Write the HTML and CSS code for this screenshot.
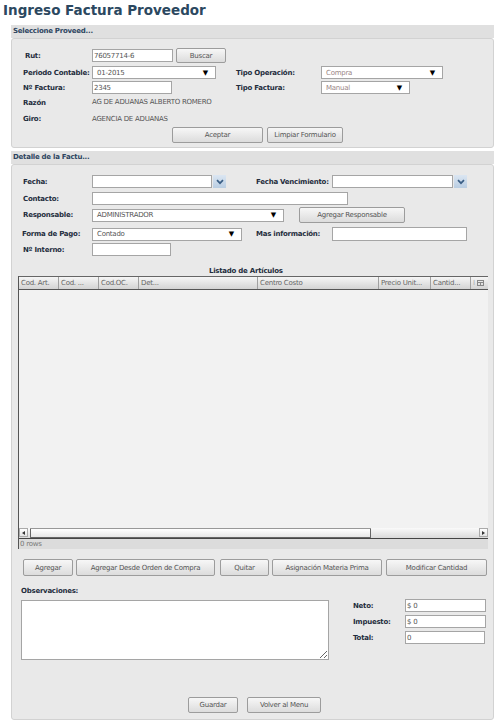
FILE: index.html
```html
<!DOCTYPE html>
<html lang="es">
  <head>
    <meta charset="utf-8">
    <title>Ingreso Factura Proveedor</title>
    <link rel="stylesheet" href="styles.css">
  </head>
  <body>
    <h1 class="page-title">Ingreso Factura Proveedor</h1>

    <div class="page">
      <!-- proveedor -->
      <div class="panel">
        <div class="panel-head">Seleccione Proveed...</div>
        <div class="panel-body prov">
          <div class="row r-rut">
            <label class="lbl lbl-rut">Rut:</label>
            <input class="txt w81" value="76057714-6">
            <button class="btn btn-buscar">Buscar</button>
          </div>
          <div class="row r-sel">
            <label class="lbl">Periodo Contable:</label>
            <div class="sel w124"><span>01-2015</span><i class="arrow">▼</i></div>
            <label class="lbl lbl-right">Tipo Operación:</label>
            <div class="sel w122 dim"><span>Compra</span><i class="arrow">▼</i></div>
          </div>
          <div class="row r-sel">
            <label class="lbl">Nº Factura:</label>
            <input class="txt w80" value="2345">
            <label class="lbl lbl-right lbl-tf">Tipo Factura:</label>
            <div class="sel w89 dim"><span>Manual</span><i class="arrow">▼</i></div>
          </div>
          <div class="row r-razon">
            <label class="lbl lbl-clip">Razón Social:</label>
            <span class="val">AG DE ADUANAS ALBERTO ROMERO</span>
          </div>
          <div class="row r-giro">
            <label class="lbl">Giro:</label>
            <span class="val">AGENCIA DE ADUANAS</span>
          </div>
          <div class="actions">
            <button class="btn btn-aceptar">Aceptar</button>
            <button class="btn btn-limpiar">Limpiar Formulario</button>
          </div>
        </div>
      </div>

      <!-- detalle -->
      <div class="panel panel-det">
        <div class="panel-head">Detalle de la Factu...</div>
        <div class="panel-body det">
          <div class="row r-fecha">
            <label class="lbl">Fecha:</label>
            <div class="date"><input class="txt w120"><span class="dd"><svg width="8" height="6" viewBox="0 0 8 6"><path d="M1 1.2 L4 4.2 L7 1.2" fill="none" stroke="#3b5f86" stroke-width="1.7"/></svg></span></div>
            <label class="lbl lbl-fv">Fecha Vencimiento:</label>
            <div class="date"><input class="txt w121"><span class="dd"><svg width="8" height="6" viewBox="0 0 8 6"><path d="M1 1.2 L4 4.2 L7 1.2" fill="none" stroke="#3b5f86" stroke-width="1.7"/></svg></span></div>
          </div>
          <div class="row r-contacto">
            <label class="lbl">Contacto:</label>
            <input class="txt w256">
          </div>
          <div class="row r-resp">
            <label class="lbl">Responsable:</label>
            <div class="sel w192"><span>ADMINISTRADOR</span><i class="arrow">▼</i></div>
            <button class="btn btn-resp">Agregar Responsable</button>
          </div>
          <div class="row r-pago">
            <label class="lbl lbl-pago">Forma de Pago:</label>
            <div class="sel w150"><span>Contado</span><i class="arrow">▼</i></div>
            <label class="lbl lbl-mas">Mas información:</label>
            <input class="txt w135 h14">
          </div>
          <div class="row r-interno">
            <label class="lbl">Nº Interno:</label>
            <input class="txt w79">
          </div>

          <div class="grid-title">Listado de Artículos</div>
          <div class="grid">
            <div class="grid-head">
              <div class="col c1">Cod. Art.</div>
              <div class="col c2">Cod. ...</div>
              <div class="col c3">Cod.OC.</div>
              <div class="col c4">Det...</div>
              <div class="col c5">Centro Costo</div>
              <div class="col c6">Precio Unit...</div>
              <div class="col c7">Cantid...</div>
              <div class="col c8"><span class="cut">I</span><svg width="7" height="6" viewBox="0 0 7 6"><rect x="0.5" y="0.5" width="6" height="5" fill="none" stroke="#888"/><path d="M0.5 2.5 H6.5 M3.5 2.5 V5.5" stroke="#888"/></svg></div>
            </div>
            <div class="grid-body"></div>
            <div class="hscroll">
              <span class="sb-btn"><i class="tri-l"></i></span>
              <span class="sb-thumb"></span>
              <span class="sb-track"></span>
              <span class="sb-btn"><i class="tri-r"></i></span>
            </div>
            <div class="grid-foot">0 rows</div>
          </div>

          <div class="grid-actions">
            <button class="btn b-agregar">Agregar</button>
            <button class="btn b-orden">Agregar Desde Orden de Compra</button>
            <button class="btn b-quitar">Quitar</button>
            <button class="btn b-asig">Asignación Materia Prima</button>
            <button class="btn b-mod">Modificar Cantidad</button>
          </div>

          <div class="obs-label">Observaciones:</div>
          <div class="obs-row">
            <textarea class="obs"></textarea>
            <div class="totals">
              <div class="tot-row"><label class="lbl">Neto:</label><input class="txt w81" value="$ 0"></div>
              <div class="tot-row"><label class="lbl">Impuesto:</label><input class="txt w81" value="$ 0"></div>
              <div class="tot-row"><label class="lbl">Total:</label><input class="txt w80" value="0"></div>
            </div>
          </div>

          <div class="final">
            <button class="btn b-guardar">Guardar</button>
            <button class="btn b-volver">Volver al Menu</button>
          </div>
        </div>
      </div>
    </div>
  </body>
</html>
```

FILE: styles.css
```css
body {
  margin: 0;
  background: #fff;
  font-family: "DejaVu Sans", Verdana, sans-serif;
  font-size: 7px;
  letter-spacing: -0.25px;
  color: #333;
}
.page-title {
  margin: 2px 0 0 3px;
  font-size: 13.5px;
  letter-spacing: 0;
  line-height: 17px;
  color: #2b4860;
}
.page {
  padding: 6px 7px 0 11px;
}

/* paneles */
.panel-head {
  height: 13px;
  line-height: 13px;
  padding-left: 2px;
  background: #e0e0e0;
  font-weight: bold;
  color: #2e4560;
}
.panel-body {
  background: #e9e9e9;
  border: 1px solid #d2d2d2;
  border-radius: 3px;
  box-sizing: border-box;
}
.prov {
  height: 110px;
  padding: 9px 0 0 11px;
}
.panel-det {
  margin-top: 3px;
}
.det {
  height: 556px;
  padding: 10px 0 0 11px;
}

/* filas */
.row {
  display: flex;
  align-items: center;
}
.lbl {
  width: 69px;
  flex: none;
  font-weight: bold;
  color: #1f2d3d;
  white-space: nowrap;
}
.lbl-rut { padding-left: 2px; width: 67px; }
.lbl-right { width: 85px; margin-left: 20px; }
.lbl-tf { margin-left: 64px; }
.r-rut { height: 15px; margin-bottom: 3px; }
.r-sel { height: 13px; margin-bottom: 2px; }
.r-razon { height: 12px; margin-top: 3px; align-items: flex-start; }
.r-razon .val { line-height: 10px; }
.r-giro { height: 10px; margin-top: 5px; }
.lbl-clip {
  height: 12px;
  overflow: hidden;
  white-space: normal;
  line-height: 10px;
  word-spacing: 30px;
  padding-top: 1px;
  box-sizing: border-box;
}
.val {
  color: #555;
}

.txt {
  box-sizing: border-box;
  height: 13px;
  border: 1px solid #a5a5a5;
  background: #fff;
  padding: 0 1px;
  font: 7px "DejaVu Sans", Verdana, sans-serif;
  letter-spacing: -0.25px;
  color: #555;
  outline: none;
}
.h14 { height: 14px; }
.w79 { width: 79px; }
.w80 { width: 80px; }
.w81 { width: 81px; }
.w120 { width: 120px; }
.w121 { width: 121px; }
.w135 { width: 135px; }
.w256 { width: 256px; }

.sel {
  box-sizing: border-box;
  height: 13px;
  border: 1px solid #a5a5a5;
  background: #fff;
  display: flex;
  align-items: center;
  justify-content: space-between;
  padding: 0 7px 0 4px;
  color: #555;
}
.sel.dim { color: #9a8686; }
.arrow {
  font-style: normal;
  color: #000;
  font-size: 7px;
}
.w89 { width: 89px; }
.w122 { width: 122px; }
.w124 { width: 124px; }
.w150 { width: 150px; }
.w192 { width: 192px; }

.btn {
  box-sizing: border-box;
  height: 16px;
  border: 1px solid #9c9c9c;
  border-radius: 2px;
  background: linear-gradient(#f7f7f7, #dcdcdc);
  font: 7px "DejaVu Sans", Verdana, sans-serif;
  letter-spacing: -0.25px;
  color: #555;
  padding: 0;
}
.btn-buscar { width: 50px; margin-left: 3px; height: 15px; }
.actions {
  display: flex;
  margin: 3px 0 0 149px;
  gap: 4px;
}
.btn-aceptar { width: 91px; }
.btn-limpiar { width: 76px; }

/* detalle */
.r-fecha { height: 13px; }
.r-contacto { height: 13px; margin-top: 4px; }
.r-resp { height: 16px; margin-top: 2px; }
.r-pago { height: 14px; margin-top: 4px; }
.r-interno { height: 13px; margin-top: 2px; }
.date { display: flex; }
.dd {
  width: 13px;
  height: 13px;
  margin-left: 1px;
  background: linear-gradient(#dbe6f2, #b9cde2);
  display: flex;
  align-items: center;
  justify-content: center;
}
.lbl-fv { width: 76px; margin-left: 30px; }
.btn-resp { width: 106px; margin-left: 15px; }
.lbl-pago { margin-left: -1px; width: 70px; }
.lbl-mas { width: 76px; margin-left: 14px; }

.grid-title {
  font-weight: bold;
  color: #1f2d3d;
  margin-top: 10px;
  padding-left: 186px;
  height: 10px;
  line-height: 10px;
}
.grid {
  width: 470px;
  margin-left: -5px;
  border-left: 1px solid #555;
  box-sizing: border-box;
}
.grid-head {
  display: flex;
  height: 14px;
  border-top: 1px solid #666;
  border-bottom: 1px solid #555;
  background: linear-gradient(#f6f6f6, #d3d3d3);
  box-sizing: border-box;
}
.col {
  box-sizing: border-box;
  border-right: 1px solid #a0a0a0;
  padding-left: 2px;
  line-height: 12px;
  color: #666;
  white-space: nowrap;
  overflow: hidden;
}
.c1 { width: 40px; }
.c2 { width: 40px; }
.c3 { width: 40px; }
.c4 { width: 119px; }
.c5 { width: 121px; }
.c6 { width: 52px; }
.c7 { width: 40px; }
.c8 { width: 17px; border-right: none; display: flex; align-items: center; gap: 2px; }
.cut { color: #aaa; }
.grid-body {
  height: 238px;
  background: #f2f2f2;
}
.hscroll {
  display: flex;
  height: 10px;
  border-bottom: 1px solid #444;
  background: linear-gradient(#fafafa, #dadada);
}
.sb-btn {
  width: 9px;
  height: 9px;
  border: 1px solid #aaa;
  box-sizing: border-box;
  display: flex;
  align-items: center;
  justify-content: center;
  background: linear-gradient(#fff, #e3e3e3);
}
.tri-l {
  border: 2px solid transparent;
  border-right: 3px solid #333;
  border-left: none;
}
.tri-r {
  border: 2px solid transparent;
  border-left: 3px solid #333;
  border-right: none;
}
.sb-thumb {
  width: 341px;
  margin-left: 2px;
  border: 1px solid #666;
  border-top-color: #999;
  border-radius: 1px;
  box-sizing: border-box;
  background: linear-gradient(#fff, #e6e6e6);
}
.sb-track { flex: 1; }
.grid-foot {
  height: 10px;
  line-height: 10px;
  background: #dcdcdc;
  color: #777;
  padding-left: 1px;
}

.grid-actions {
  display: flex;
  margin-top: 10px;
}
.grid-actions .btn { height: 17px; }
.b-agregar { width: 50px; }
.b-orden { width: 139px; margin-left: 3px; }
.b-quitar { width: 49px; margin-left: 5px; }
.b-asig { width: 110px; margin-left: 3px; }
.b-mod { width: 101px; margin-left: 4px; }

.obs-label {
  font-weight: bold;
  color: #1f2d3d;
  margin: 10px 0 0 -2px;
  height: 10px;
  line-height: 10px;
}
.obs-row {
  display: flex;
  margin-top: 4px;
  margin-left: -2px;
}
.obs {
  box-sizing: border-box;
  width: 308px;
  height: 60px;
  border: 1px solid #a5a5a5;
  background: #fff;
  margin: 0;
}
.totals {
  margin-left: 24px;
  margin-top: -1px;
}
.tot-row {
  display: flex;
  align-items: center;
  height: 13px;
  margin-bottom: 3px;
}
.tot-row .lbl { width: 52px; }
.final {
  display: flex;
  gap: 9px;
  margin: 37px 0 0 165px;
}
.b-guardar { width: 50px; }
.b-volver { width: 74px; }
```
